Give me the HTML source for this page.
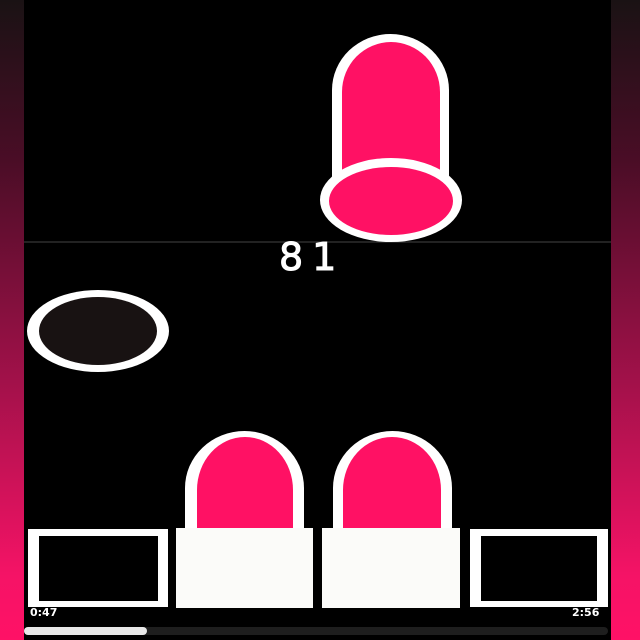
<!DOCTYPE html>
<html><head><style>
html,body{margin:0;padding:0;width:640px;height:640px;overflow:hidden;background:#000}
.side{position:absolute;top:0;height:640px;background:linear-gradient(#1a1214 0%,#4a0d26 25%,#a3114a 60%,#f51366 90%,#ff1166 100%)}
svg{position:absolute;left:0;top:0}
.t{position:absolute;font-family:"DejaVu Sans","Liberation Sans",sans-serif;color:#fff;font-weight:bold}
</style></head><body>
<div class="side" style="left:0;width:24px"></div>
<div class="side" style="left:611px;width:29px"></div>
<svg width="640" height="640" viewBox="0 0 640 640">
<rect x="24" y="241.5" width="587" height="1" fill="#444"/>
<path d="M332 200 V90 A58.5 56 0 0 1 449 90 V200 Z" fill="#fff"/>
<path d="M342 200 V92 A49 50 0 0 1 440 92 V200 Z" fill="#ff1164"/>
<ellipse cx="391" cy="200" rx="71" ry="42" fill="#fff"/>
<ellipse cx="391" cy="201" rx="62" ry="34" fill="#ff1164"/>
<ellipse cx="98" cy="331" rx="71" ry="41" fill="#fff"/>
<ellipse cx="98" cy="331" rx="59" ry="34" fill="#181212"/>
<path d="M185 540 V488 A59.5 57 0 0 1 304 488 V540 Z" fill="#fff"/>
<path d="M197 540 V490 A48 53 0 0 1 293 490 V540 Z" fill="#ff1164"/>
<path d="M333 540 V488 A59.5 57 0 0 1 452 488 V540 Z" fill="#fff"/>
<path d="M343 540 V490 A49 53 0 0 1 441 490 V540 Z" fill="#ff1164"/>
<rect x="28" y="529" width="140" height="78" fill="#fff"/>
<rect x="39" y="536" width="119" height="65" fill="#000"/>
<rect x="176" y="528" width="137" height="80" fill="#fbfbf9"/>
<rect x="322" y="528" width="138" height="80" fill="#fbfbf9"/>
<rect x="470" y="529" width="138" height="78" fill="#fff"/>
<rect x="481" y="536" width="116" height="65" fill="#000"/>
<rect x="24" y="627" width="584" height="8" rx="4" fill="#1e1e1e"/>
<rect x="24" y="627" width="123" height="8" rx="4" fill="#e8e8e8"/>
</svg>
<div class="t" style="left:279px;top:235px;font-size:38px;font-weight:normal;letter-spacing:9px;-webkit-text-stroke:1px #fff">81</div>
<div class="t" style="left:30px;top:606px;font-size:11px">0:47</div>
<div class="t" style="left:572px;top:606px;font-size:11px">2:56</div>
</body></html>
